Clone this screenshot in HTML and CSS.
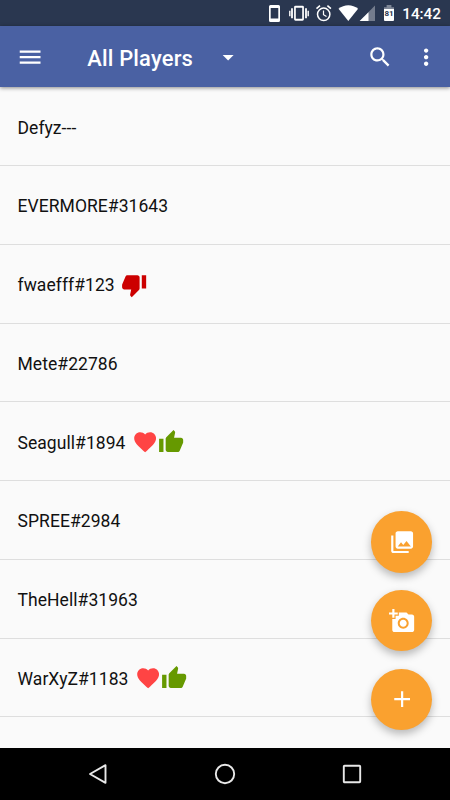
FILE: index.html
```html
<!DOCTYPE html>
<html>
	<head>
		<meta charset="UTF-8">
		<title>All Players</title>
		<link rel="stylesheet" href="styles.css">
	</head>
	<body>
		<!-- shared icon shapes -->
		<svg class="defs">
			<symbol id="heart" viewBox="0 0 24 24"><path d="M12 21.35l-1.45-1.32C5.4 15.36 2 12.28 2 8.5 2 5.42 4.42 3 7.5 3c1.74 0 3.41.81 4.5 2.09C13.09 3.81 14.76 3 16.5 3 19.58 3 22 5.42 22 8.5c0 3.78-3.4 6.86-8.55 11.54L12 21.35z"/></symbol>
			<symbol id="up" viewBox="0 0 24 24"><path d="M1 21h4V9H1v12zm22-11c0-1.1-.9-2-2-2h-6.31l.95-4.57.03-.32c0-.41-.17-.79-.44-1.06L14.17 1 7.59 7.59C7.22 7.95 7 8.45 7 9v10c0 1.1.9 2 2 2h9c.83 0 1.54-.5 1.84-1.22l3.02-7.05c.09-.23.14-.47.14-.73v-2z"/></symbol>
			<symbol id="down" viewBox="0 0 24 24"><path d="M15 3H6c-.83 0-1.54.5-1.84 1.22l-3.02 7.05c-.09.23-.14.47-.14.73v2c0 1.1.9 2 2 2h6.31l-.95 4.57-.03.32c0 .41.17.79.44 1.06L9.83 23l6.59-6.59c.36-.36.58-.86.58-1.41V5c0-1.1-.9-2-2-2zm4 0v12h4V3h-4z"/></symbol>
		</svg>
		<div id="outer">
			<div id="status">
				<svg class="statusIcons" viewBox="0 0 130 26" fill="#fff">
					<path fill-rule="evenodd" d="M2.500 5h8q1.500 0 1.500 1.500v14q0 1.500-1.500 1.500h-8Q1 22 1 20.500v-14Q1 5 2.500 5zM2.700 8v10.500h7.600V8z"/>
					<g transform="translate(1.500 -.3)">
						<path fill-rule="evenodd" d="M26 6h7q1.400 0 1.400 1.400v12.200q0 1.400-1.400 1.400h-7q-1.400 0-1.400-1.400V7.400Q24.600 6 26 6zM26.300 8v11h6.400V8z"/>
						<path d="M21.600 8.500h1.800v10h-1.800zM19.600 11h1.400v5.500h-1.400zM35.600 8.500h1.800v10h-1.800zM38 11h1.400v5.500h-1.400z"/>
					</g>
					<g fill="none" stroke="#fff">
						<circle cx="55.700" cy="14.300" r="6.200" stroke-width="1.500"/>
						<path d="M55.500 10.500v4.200l3 1.900" stroke-width="1.200"/>
						<path d="M48.500 8.700l3.500-3M62.900 8.700l-3.500-3" stroke-width="1.600"/>
					</g>
					<path d="M80.300 20.900L70.500 8.700C76 4 84.600 4 90.100 8.700z"/>
					<path d="M107 5.500V21H91.700z" opacity=".35"/>
					<path d="M100.500 12.200V21H91.700z"/>
					<path d="M116 7.200h2.600V5h4.800v2.200h2.600v2h-10z" opacity=".4"/>
					<path d="M116 9h10v11q0 1-1 1h-8q-1 0-1-1z"/>
					<text x="121" y="16.200" class="level">81</text>
				</svg>
				<span class="clock">14:42</span>
			</div>
			<div id="bar">
				<svg class="icon menu" viewBox="0 0 24 24"><path d="M2.500 18h19v-2h-19v2zm0-5h19v-2h-19v2zm0-7v2h19V6h-19z"/></svg>
				<h1>All Players</h1>
				<svg class="icon arrow" viewBox="0 0 24 24"><path d="M7 10l5 5 5-5z"/></svg>
				<svg class="icon search" viewBox="0 0 24 24"><path d="M15.500 14h-.79l-.28-.27C15.410 12.590 16 11.110 16 9.500 16 5.910 13.090 3 9.500 3S3 5.910 3 9.500 5.910 16 9.500 16c1.610 0 3.090-.59 4.230-1.570l.27.28v.79l5 4.990L20.490 19l-4.990-5zm-6 0C7.010 14 5 11.990 5 9.500S7.010 5 9.500 5 14 7.010 14 9.500 11.990 14 9.500 14z"/></svg>
				<svg class="icon" viewBox="0 0 24 24"><path d="M12 8c1.100 0 2-.9 2-2s-.9-2-2-2-2 .9-2 2 .9 2 2 2zm0 2c-1.100 0-2 .9-2 2s.9 2 2 2 2-.9 2-2-.9-2-2-2zm0 6c-1.100 0-2 .9-2 2s.9 2 2 2 2-.9 2-2-.9-2-2-2z"/></svg>
			</div>
			<ul id="players">
				<li>Defyz---</li>
				<li>EVERMORE#31643</li>
				<li>fwaefff#123<span class="marks"><svg class="icon down"><use href="#down"/></svg></span></li>
				<li>Mete#22786</li>
				<li>Seagull#1894<span class="marks"><svg class="icon heart"><use href="#heart"/></svg><svg class="icon up"><use href="#up"/></svg></span></li>
				<li>SPREE#2984</li>
				<li>TheHell#31963</li>
				<li>WarXyZ#1183<span class="marks"><svg class="icon heart"><use href="#heart"/></svg><svg class="icon up"><use href="#up"/></svg></span></li>
			</ul>
			<div id="fabs">
				<a href="javascript:;"><svg class="icon" viewBox="0 0 24 24"><path d="M22 16V4c0-1.100-.9-2-2-2H8c-1.100 0-2 .9-2 2v12c0 1.100.9 2 2 2h12c1.100 0 2-.9 2-2zm-11-4l2.030 2.710L16 11l4 5H8l3-4zM2 6v14c0 1.100.9 2 2 2h14v-2H4V6H2z"/></svg></a>
				<a href="javascript:;"><svg class="icon" viewBox="0 0 24 24"><path d="M3 4V1h2v3h3v2H5v3H3V6H0V4h3zm3 6V7h3V4h7l1.830 2H21c1.100 0 2 .9 2 2v12c0 1.100-.9 2-2 2H5c-1.100 0-2-.9-2-2V10h3zm7 9c2.760 0 5-2.240 5-5s-2.240-5-5-5-5 2.240-5 5 2.240 5 5 5zm-3.200-5c0 1.770 1.430 3.200 3.200 3.200s3.200-1.430 3.200-3.200-1.430-3.200-3.200-3.200-3.200 1.430-3.200 3.200z"/></svg></a>
				<a href="javascript:;"><svg class="icon" viewBox="0 0 24 24"><path d="M19.200 13H13v6.200h-2V13H4.800v-2H11V4.800h2V11h6.200v2z"/></svg></a>
			</div>
			<div id="nav">
				<svg viewBox="0 0 26 26"><path d="M20.500 4.200v17.600L5 13z"/></svg>
				<svg viewBox="0 0 26 26"><circle cx="13" cy="13" r="9.200"/></svg>
				<svg viewBox="0 0 26 26"><rect x="4.800" y="4.800" width="16.400" height="16.400" rx=".8"/></svg>
			</div>
		</div>
	</body>
</html>
```
FILE: styles.css
```css
*{
	margin: 0;
	padding: 0;
	box-sizing: border-box;
}
body{
	font-family: Roboto, "Noto Sans", sans-serif;
	background: #fafafa;
}
.defs{
	display: none;
}
#outer{
	width: 450px;
	height: 800px;
	position: relative;
	overflow: hidden;
	display: flex;
	flex-direction: column;
}
#status{
	height: 26px;
	flex: none;
	display: flex;
	justify-content: flex-end;
	padding-right: 9px;
	background: #2a3750;
}
.statusIcons{
	width: 130px;
	height: 26px;
}
.level{
	font-size: 8px;
	font-weight: bold;
	text-anchor: middle;
	fill: #2a3750;
}
.clock{
	width: 43px;
	text-align: right;
	color: #fff;
	font-size: 15.3px;
	font-weight: 500;
	line-height: 28px;
}
#bar{
	height: 61.25px;
	flex: none;
	display: flex;
	align-items: center;
	padding: 0 10.9px 0 17.25px;
	background: #4a61a3;
	box-shadow: 0 1px 4px rgba(0,0,0,.45);
	z-index: 1;
}
#bar h1{
	width: 127.75px;
	color: #fff;
	font-size: 21.9px;
	font-weight: 500;
	letter-spacing: .2px;
	line-height: 26px;
	padding-top: 4px;
}
.icon{
	width: 26.25px;
	height: 26.25px;
	flex: none;
	fill: #fff;
}
.menu{
	margin-right: 43.75px;
}
.search{
	margin-left: auto;
	margin-right: 19.8px;
}
#players{
	flex: 1;
	min-height: 0;
	overflow: hidden;
	list-style: none;
}
#players li{
	height: 78.75px;
	display: flex;
	align-items: center;
	padding-left: 17.5px;
	padding-top: 3px;
	border-bottom: 1px solid #dedede;
	color: #111;
	font-size: 17.5px;
	letter-spacing: .06px;
}
.marks{
	display: flex;
	margin-left: 6.5px;
	margin-top: -1px;
}
#players .heart{
	fill: #ff4444;
}
#players .up{
	fill: #669900;
}
#players .down{
	fill: #cc0000;
}
#fabs{
	position: absolute;
	right: 17.75px;
	bottom: 70px;
	display: flex;
	flex-direction: column;
	gap: 17.5px;
}
#fabs a{
	width: 61.25px;
	height: 61.25px;
	border-radius: 50%;
	display: flex;
	align-items: center;
	justify-content: center;
	background: #faa12f;
	box-shadow: 0 4px 8px rgba(0,0,0,.27);
}
#nav{
	height: 52.5px;
	flex: none;
	display: flex;
	justify-content: center;
	align-items: center;
	gap: 100.6px;
	background: #000;
}
#nav svg{
	width: 26px;
	height: 26px;
	fill: none;
	stroke: #e8e8e8;
	stroke-width: 1.9;
	stroke-linejoin: round;
}
```
